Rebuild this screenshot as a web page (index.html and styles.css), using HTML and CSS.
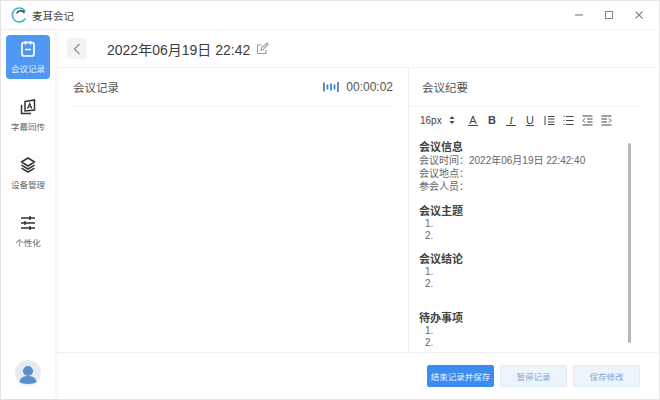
FILE: index.html
```html
<!DOCTYPE html>
<html>
  <head>
    <meta charset="UTF-8" />
    <title>麦耳会记</title>
    <link rel="stylesheet" href="styles.css">
  </head>

  <body>
    <div class="window">
      <div class="titlebar">
        <svg class="logo" width="18" height="18" viewBox="0 0 18 18" fill="none">
          <path d="M15 5 A7 7 0 1 0 15 13" stroke="#3fb3c9" stroke-width="1.6" stroke-linecap="round" />
          <path d="M7 7 A4 4 0 0 1 14 6.5" stroke="#2d4a5e" stroke-width="1.6" stroke-linecap="round" />
        </svg>
        <span class="app_name">麦耳会记</span>
        <div class="win_buttons">
          <svg width="10" height="10" viewBox="0 0 10 10"><path d="M1 5H9" stroke="#888" stroke-width="1.2" /></svg>
          <svg width="10" height="10" viewBox="0 0 10 10"><rect x="1.5" y="1.5" width="7" height="7" fill="none" stroke="#888" stroke-width="1.1" /></svg>
          <svg width="10" height="10" viewBox="0 0 10 10"><path d="M1.5 1.5L8.5 8.5M8.5 1.5L1.5 8.5" stroke="#888" stroke-width="1.1" /></svg>
        </div>
      </div>

      <div class="body">
        <div class="sidebar">
          <div class="nav_item active">
            <svg width="18" height="18" viewBox="0 0 18 18" fill="none" stroke="#fff" stroke-width="1.7">
              <rect x="3" y="2.5" width="12" height="13.5" rx="2" />
              <path d="M6.5 1V4.5M11.5 1V4.5M6 9.5H12" />
            </svg>
            <span>会议记录</span>
          </div>
          <div class="nav_item">
            <svg width="18" height="18" viewBox="0 0 18 18" fill="none" stroke="#333" stroke-width="1.5">
              <path d="M2.5 7V15.5H12" />
              <path d="M6 3.5L15.5 2V12L6 13Z" />
              <path d="M8.5 10.5L10.7 5.5L12.8 10.5M9.3 9H12" stroke-width="1.2" />
            </svg>
            <span>字幕同传</span>
          </div>
          <div class="nav_item">
            <svg width="18" height="18" viewBox="0 0 18 18" fill="none" stroke="#333" stroke-width="1.5" stroke-linejoin="round">
              <path d="M9 2L15.5 6L9 10L2.5 6Z" />
              <path d="M2.5 9.2L9 13L15.5 9.2" />
              <path d="M2.5 12.2L9 16L15.5 12.2" />
            </svg>
            <span>设备管理</span>
          </div>
          <div class="nav_item">
            <svg width="18" height="18" viewBox="0 0 18 18" fill="none" stroke="#333" stroke-width="1.5">
              <path d="M2 4H16M2 9H16M2 14H16" />
              <path d="M11 2.2V5.8M6 7.2V10.8M11 12.2V15.8" stroke-width="1.8" />
            </svg>
            <span>个性化</span>
          </div>
          <div class="avatar">
            <svg width="26" height="26" viewBox="0 0 26 26">
              <circle cx="13" cy="13" r="13" fill="#e6ebf3" />
              <circle cx="13" cy="11" r="5" fill="#5b8fc9" />
              <path d="M4.5 22C5 17.5 9 16 13 16C17 16 21 17.5 21.5 22C19 24.5 7 24.5 4.5 22Z" fill="#5b8fc9" />
            </svg>
          </div>
        </div>

        <div class="main">
          <div class="date_bar">
            <div class="back_btn">
              <svg width="8" height="12" viewBox="0 0 8 12" fill="none"><path d="M6.5 1L1.5 6L6.5 11" stroke="#8a929c" stroke-width="1.2" /></svg>
            </div>
            <span class="date_text">2022年06月19日 22:42</span>
            <svg class="edit_icon" width="13" height="13" viewBox="0 0 13 13" fill="none" stroke="#9aa0a6" stroke-width="1.1">
              <path d="M10 7.5V11.5H1.5V3H6" />
              <path d="M5 8.5L5.5 6L11 1L12 2.2L7 7.8Z" />
            </svg>
          </div>

          <div class="panels">
            <div class="panel_left">
              <div class="panel_head">
                <span>会议记录</span>
                <div class="rec_info">
                  <svg width="17" height="12" viewBox="0 0 17 12" stroke="#3d7fc4" stroke-width="1.7">
                    <path d="M1 1.5V10.5M4.5 3.5V8.5M8 2.5V9.5M11.5 3.5V8.5M15 1V11" />
                  </svg>
                  <span>00:00:02</span>
                </div>
              </div>
            </div>

            <div class="panel_right">
              <div class="notes_head">会议纪要</div>
              <div class="toolbar">
                <span class="size_pick">16px</span>
                <svg class="size_arrows" width="6" height="10" viewBox="0 0 6 10" fill="#444"><path d="M3 1L5.5 4H.5ZM3 9L.5 6H5.5Z" /></svg>
                <span class="tool tool_a">A</span>
                <span class="tool tool_b">B</span>
                <span class="tool tool_i">I</span>
                <span class="tool tool_u">U</span>
                <svg class="tool_svg" width="11" height="11" viewBox="0 0 11 11" stroke="#444"><path d="M1 1V10M4 1.5H10.5M4 4H10.5M4 7H10.5M4 9.5H10.5" /></svg>
                <svg class="tool_svg" width="11" height="11" viewBox="0 0 11 11" stroke="#444"><path d="M.5 1.5H1.5M.5 5.5H1.5M.5 9.5H1.5M3 1.5H10.5M3 5.5H10.5M3 9.5H10.5" /></svg>
                <svg class="tool_svg" width="11" height="11" viewBox="0 0 11 11" stroke="#444"><path d="M.5 1H10.5M5 4H10.5M5 7H10.5M.5 10H10.5M3 3.5L1 5.5L3 7.5" fill="none" /></svg>
                <svg class="tool_svg" width="11" height="11" viewBox="0 0 11 11" stroke="#444"><path d="M.5 1H10.5M.5 4H6M.5 7H6M.5 10H10.5M8 3.5L10 5.5L8 7.5" fill="none" /></svg>
              </div>
              <div class="notes_scroll">
                <div class="notes">
                  <h4>会议信息</h4>
                  <p>会议时间：2022年06月19日 22:42:40</p>
                  <p>会议地点：</p>
                  <p>参会人员：</p>
                  <h4 class="gap">会议主题</h4>
                  <ol><li></li><li></li></ol>
                  <h4 class="gap">会议结论</h4>
                  <ol><li></li><li></li></ol>
                  <h4 class="gap_big">待办事项</h4>
                  <ol><li></li><li></li></ol>
                </div>
                <div class="scroll_thumb"></div>
              </div>
            </div>
          </div>

          <div class="footer">
            <button class="btn primary">结束记录并保存</button>
            <button class="btn">暂停记录</button>
            <button class="btn">保存修改</button>
          </div>
        </div>
      </div>
    </div>
  </body>
</html>
```

FILE: styles.css
```css
* {
  box-sizing: border-box;
}
html,
body {
  margin: 0;
  height: 100%;
}
body {
  font-family: "Liberation Sans", "Noto Sans CJK SC", sans-serif;
  color: #444;
  background-color: #fff;
  overflow: hidden;
}
.window {
  width: 660px;
  height: 400px;
  display: flex;
  flex-direction: column;
  border: 1px solid #e4e4e4;
}

/* Title bar */
.titlebar {
  height: 29px;
  flex: none;
  display: flex;
  align-items: center;
  padding-left: 9px;
  border-bottom: 1px solid #f2f2f2;
}
.app_name {
  margin-left: 4px;
  font-size: 10.5px;
  color: #444;
}
.win_buttons {
  margin-left: auto;
  margin-right: 15px;
  display: flex;
  gap: 20px;
}

.body {
  flex: 1;
  display: flex;
  min-height: 0;
}

/* Left nav */
.sidebar {
  width: 54px;
  flex: none;
  display: flex;
  flex-direction: column;
  align-items: center;
  padding-top: 5px;
  box-shadow: 2px 0 4px rgba(0, 0, 0, 0.05);
}
.nav_item {
  width: 44px;
  height: 44px;
  margin-bottom: 14px;
  border-radius: 4px;
  display: flex;
  flex-direction: column;
  align-items: center;
  justify-content: center;
  gap: 4px;
  font-size: 8.5px;
  color: #666;
}
.nav_item.active {
  background-color: #4f98f2;
  color: #e4f0fd;
}
.avatar {
  margin-top: auto;
  margin-bottom: 13px;
  height: 26px;
}

/* Main area */
.main {
  flex: 1;
  display: flex;
  flex-direction: column;
  min-width: 0;
}
.date_bar {
  height: 38px;
  flex: none;
  display: flex;
  align-items: center;
  padding-left: 12px;
  border-bottom: 1px solid #f2f3f4;
}
.back_btn {
  width: 20px;
  height: 21px;
  background-color: #f2f3f5;
  border-radius: 2px;
  display: flex;
  align-items: center;
  justify-content: center;
}
.date_text {
  margin-left: 20px;
  font-size: 14px;
  color: #3c3c3c;
}
.edit_icon {
  margin-left: 6px;
}
.panels {
  flex: 1;
  display: flex;
  min-height: 0;
}
.panel_left {
  width: 354px;
  flex: none;
  padding: 0 15px 0 18px;
  border-right: 1px solid #eeeeee;
}
.panel_head {
  height: 39px;
  display: flex;
  align-items: center;
  justify-content: space-between;
  font-size: 11.5px;
  color: #555;
  border-bottom: 1px solid #f2f3f4;
}
.rec_info {
  display: flex;
  align-items: center;
  gap: 6px;
  font-size: 12px;
}

/* Notes panel */
.panel_right {
  flex: 1;
  display: flex;
  flex-direction: column;
  min-width: 0;
}
.notes_head {
  height: 39px;
  flex: none;
  display: flex;
  align-items: center;
  padding-left: 13px;
  font-size: 11.5px;
  color: #555;
  border-bottom: 1px solid #f2f3f4;
  margin-right: 20px;
}
.toolbar {
  height: 26px;
  flex: none;
  display: flex;
  align-items: center;
  padding-left: 11px;
}
.size_pick {
  font-size: 10px;
  width: 29px;
}
.size_arrows {
  margin-right: 13px;
}
.tool {
  width: 10px;
  text-align: center;
  font-size: 11px;
  line-height: 12px;
  margin-right: 9px;
}
.tool_a {
  border-bottom: 1px solid #444;
  line-height: 10px;
}
.tool_b {
  font-weight: bold;
}
.tool_i {
  font-style: italic;
  font-family: "Liberation Serif", serif;
  border-bottom: 1px solid #444;
  line-height: 10px;
}
.tool_u {
  text-decoration: underline;
}
.tool_svg {
  margin-right: 8px;
}
.notes_scroll {
  flex: 1;
  display: flex;
  min-height: 0;
  padding: 8px 0 9px 10px;
}
.notes {
  flex: 1;
  font-size: 10px;
  line-height: 13px;
  color: #666;
}
.notes h4 {
  margin: 0;
  font-size: 11px;
  line-height: 13px;
  font-weight: bold;
  color: #444;
}
.notes p {
  margin: 0;
}
.notes .gap {
  margin-top: 12px;
}
.notes .gap_big {
  margin-top: 23px;
}
.notes ol {
  margin: 0 0 0 0;
  padding-left: 17px;
  line-height: 11.5px;
}
.scroll_thumb {
  width: 3px;
  margin-right: 28px;
  margin-top: 2px;
  background-color: #b8b8b8;
  border-radius: 2px;
}

/* Bottom buttons */
.footer {
  height: 47px;
  flex: none;
  display: flex;
  align-items: center;
  justify-content: flex-end;
  gap: 6px;
  padding-right: 19px;
  border-top: 1px solid #f0f0f0;
}
.btn {
  width: 67px;
  height: 22px;
  padding: 0;
  border: 1px solid #dfeafa;
  border-radius: 2px;
  background-color: #eef4fc;
  color: #7fa8d8;
  font-family: inherit;
  font-size: 8.5px;
}
.btn.primary {
  background-color: #3b8bf0;
  border-color: #3b8bf0;
  color: #eaf3fe;
}
```
